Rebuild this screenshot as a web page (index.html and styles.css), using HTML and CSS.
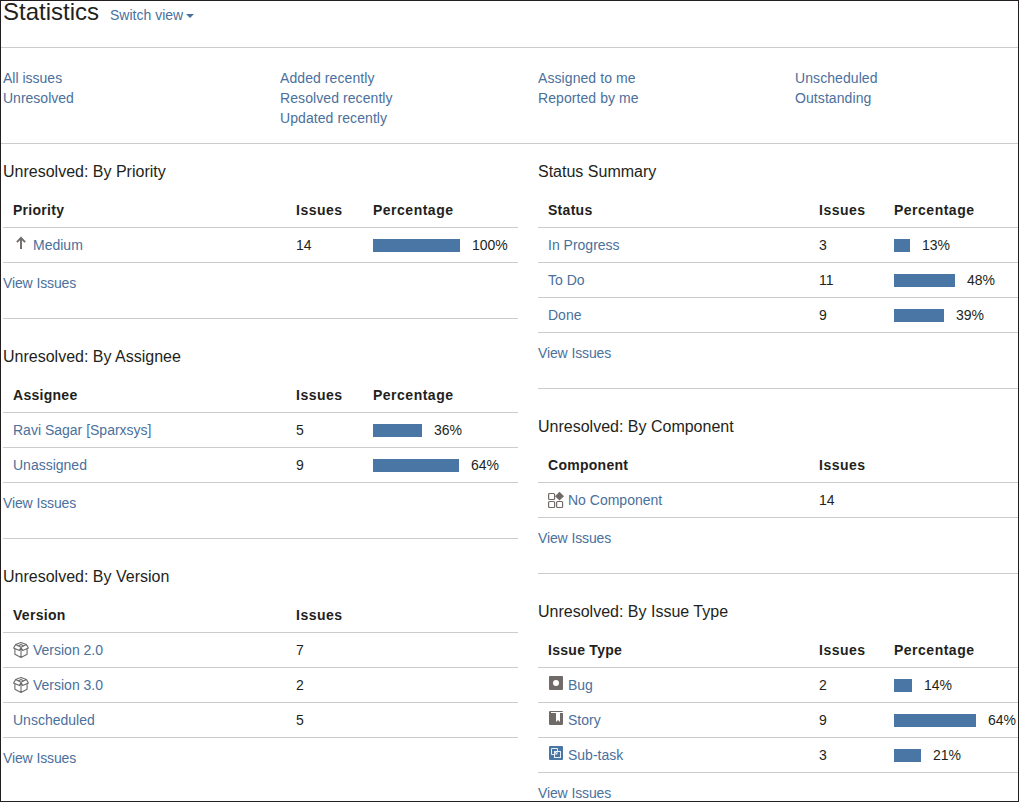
FILE: index.html
```html
<!DOCTYPE html>
<html lang="en">
<head>
<meta charset="utf-8">
<title>Statistics</title>
<link rel="stylesheet" href="styles.css">
</head>
<body>
<svg class="defs" width="0" height="0" aria-hidden="true">
  <symbol id="box" viewBox="0 0 16 16"><path d="M8 .6 13.4 2.6 15.4 6 14.1 6.8v5.4L8 15.4 1.9 12.2V6.8L.6 6 2.6 2.6zM2.6 2.6 8 5.2l5.4-2.6M8 5.2v10.2M.6 6l5.7 2.6L8 5.4l1.7 3.2L15.4 6M5.3 4 8 2.6 10.7 4" fill="none" stroke="#6b6b6b" stroke-width="1.1" stroke-linejoin="round"/></symbol>
</svg>
<div class="frame">
  <header class="top"><h1>Statistics</h1><a class="switch">Switch view <span class="caret"></span></a></header>
  <nav class="filters">
    <div><a>All issues</a><a>Unresolved</a></div>
    <div class="wide"><a>Added recently</a><a>Resolved recently</a><a>Updated recently</a></div>
    <div class="wide"><a>Assigned to me</a><a>Reported by me</a></div>
    <div class="wide"><a>Unscheduled</a><a>Outstanding</a></div>
  </nav>
  <main class="columns">
    <div class="col left">
      <section>
        <h2>Unresolved: By Priority</h2>
        <div class="row head"><span>Priority</span><span>Issues</span><span>Percentage</span></div>
        <div class="row"><a class="name"><svg class="icon arrow" viewBox="0 0 16 16"><path d="M8 14V3M3.9 7.2 8 2.8l4.1 4.4" fill="none" stroke="#706b68" stroke-width="1.9"/></svg>Medium</a><span>14</span><span class="pct"><i class="bar" style="width:87px"></i>100%</span></div>
        <a class="view">View Issues</a>
      </section>
      <section>
        <h2>Unresolved: By Assignee</h2>
        <div class="row head"><span>Assignee</span><span>Issues</span><span>Percentage</span></div>
        <div class="row"><a class="name">Ravi Sagar [Sparxsys]</a><span>5</span><span class="pct"><i class="bar" style="width:49px"></i>36%</span></div>
        <div class="row"><a class="name">Unassigned</a><span>9</span><span class="pct"><i class="bar" style="width:86px"></i>64%</span></div>
        <a class="view">View Issues</a>
      </section>
      <section>
        <h2>Unresolved: By Version</h2>
        <div class="row head"><span>Version</span><span>Issues</span></div>
        <div class="row"><a class="name"><svg class="icon"><use href="#box"/></svg>Version 2.0</a><span>7</span></div>
        <div class="row"><a class="name"><svg class="icon"><use href="#box"/></svg>Version 3.0</a><span>2</span></div>
        <div class="row"><a class="name">Unscheduled</a><span>5</span></div>
        <a class="view">View Issues</a>
      </section>
    </div>
    <div class="col right">
      <section>
        <h2>Status Summary</h2>
        <div class="row head"><span>Status</span><span>Issues</span><span>Percentage</span></div>
        <div class="row"><a class="name">In Progress</a><span>3</span><span class="pct"><i class="bar" style="width:16px"></i>13%</span></div>
        <div class="row"><a class="name">To Do</a><span>11</span><span class="pct"><i class="bar" style="width:61px"></i>48%</span></div>
        <div class="row"><a class="name">Done</a><span>9</span><span class="pct"><i class="bar" style="width:50px"></i>39%</span></div>
        <a class="view">View Issues</a>
      </section>
      <section>
        <h2>Unresolved: By Component</h2>
        <div class="row head"><span>Component</span><span>Issues</span></div>
        <div class="row"><a class="name"><svg class="icon" viewBox="0 0 16 16"><g fill="none" stroke="#706b68" stroke-width="1.2"><rect x=".6" y="1.5" width="6" height="6" rx="1"/><rect x=".6" y="9.5" width="6" height="6" rx="1"/><rect x="8.6" y="9.5" width="6" height="6" rx="1"/></g><path d="m11.5-.2 4.5 4.4-4.5 4.4L7 4.2z" fill="#706b68"/></svg>No Component</a><span>14</span></div>
        <a class="view">View Issues</a>
      </section>
      <section>
        <h2>Unresolved: By Issue Type</h2>
        <div class="row head"><span>Issue Type</span><span>Issues</span><span>Percentage</span></div>
        <div class="row"><a class="name"><svg class="icon raised" viewBox="0 0 16 16"><rect x="1" y="1" width="14" height="14" rx="1" fill="#706b68"/><circle cx="8" cy="8" r="3" fill="#fff"/></svg>Bug</a><span>2</span><span class="pct"><i class="bar" style="width:18px"></i>14%</span></div>
        <div class="row"><a class="name"><svg class="icon raised" viewBox="0 0 16 16"><rect x="1" y="1" width="14" height="14" rx="1" fill="#706b68"/><path d="M3 2h12v1h-3v9l-2-2-2 2V3H3z" fill="#fff"/></svg>Story</a><span>9</span><span class="pct"><i class="bar" style="width:82px"></i>64%</span></div>
        <div class="row"><a class="name"><svg class="icon raised" viewBox="0 0 16 16"><rect x="1" y="1" width="14" height="14" rx="1" fill="#4a76a5"/><g fill="none" stroke="#e8eef5"><path d="M6 9.5H3.5v-6h6V6"/><rect x="6.5" y="6.5" width="6" height="6"/><path d="M6.5 6.5 9 9M9 6.8V9H6.8"/></g></svg>Sub-task</a><span>3</span><span class="pct"><i class="bar" style="width:27px"></i>21%</span></div>
        <a class="view">View Issues</a>
      </section>
    </div>
  </main>
</div>
</body>
</html>
```
FILE: styles.css
```css
* { box-sizing: border-box; }
body {
  margin: 0;
  background: #fff;
  color: #231f20;
  font: 14px/20px "Liberation Sans", Arial, sans-serif;
}
.defs { display: block; height: 0; }
.frame {
  width: 1019px;
  height: 802px;
  border: 1px solid #231f20;
  overflow: hidden;
}
a { color: #4a709c; text-decoration: none; }
.top {
  display: flex;
  height: 47px;
  padding-left: 2px;
  border-bottom: 1px solid #ccc;
}
h1 {
  margin: 0 11px 0 0;
  font-size: 24px;
  line-height: 21px;
  font-weight: 400;
}
.switch { padding-top: 4px; display: flex; }
.caret {
  margin: 9px 0 0 3px;
  border: 4px solid transparent;
  border-top-color: #4a709c;
  border-bottom: 0;
  height: 4px;
}
.filters {
  display: grid;
  grid-template-columns: 277px 258px 257px 1fr;
  height: 96px;
  padding: 20px 0 0 2px;
  border-bottom: 1px solid #ccc;
}
.filters a { display: block; }
.wide { letter-spacing: .08px; }
.columns {
  display: grid;
  grid-template-columns: 515px 480px;
  gap: 20px;
  padding-left: 2px;
}
section { padding-top: 27px; }
section + section { border-top: 1px solid #ccc; }
section:first-child { padding-top: 17px; }
h2 {
  margin: 0 0 11px;
  font-size: 16px;
  line-height: 22px;
  font-weight: 400;
}
.row {
  display: grid;
  height: 35px;
  align-items: center;
  padding-left: 10px;
  border-bottom: 1px solid #ccc;
  line-height: 34px;
  white-space: nowrap;
}
.left .row { grid-template-columns: 283px 77px 1fr; }
.right .row { grid-template-columns: 271px 75px 1fr; }
.head { height: 34px; font-weight: 700; letter-spacing: .5px; line-height: 33px; }
.head span:first-child { letter-spacing: .28px; }
.name { display: flex; align-items: center; }
.icon { width: 16px; height: 16px; margin-right: 4px; overflow: visible; }
.raised { margin-top: -4px; }
.arrow { margin-top: -4px; }
.pct { display: flex; align-items: center; gap: 12px; }
.bar { height: 13px; background: #4a76a5; }
.view { display: block; height: 55px; padding-top: 10px; letter-spacing: -.12px; }
```
